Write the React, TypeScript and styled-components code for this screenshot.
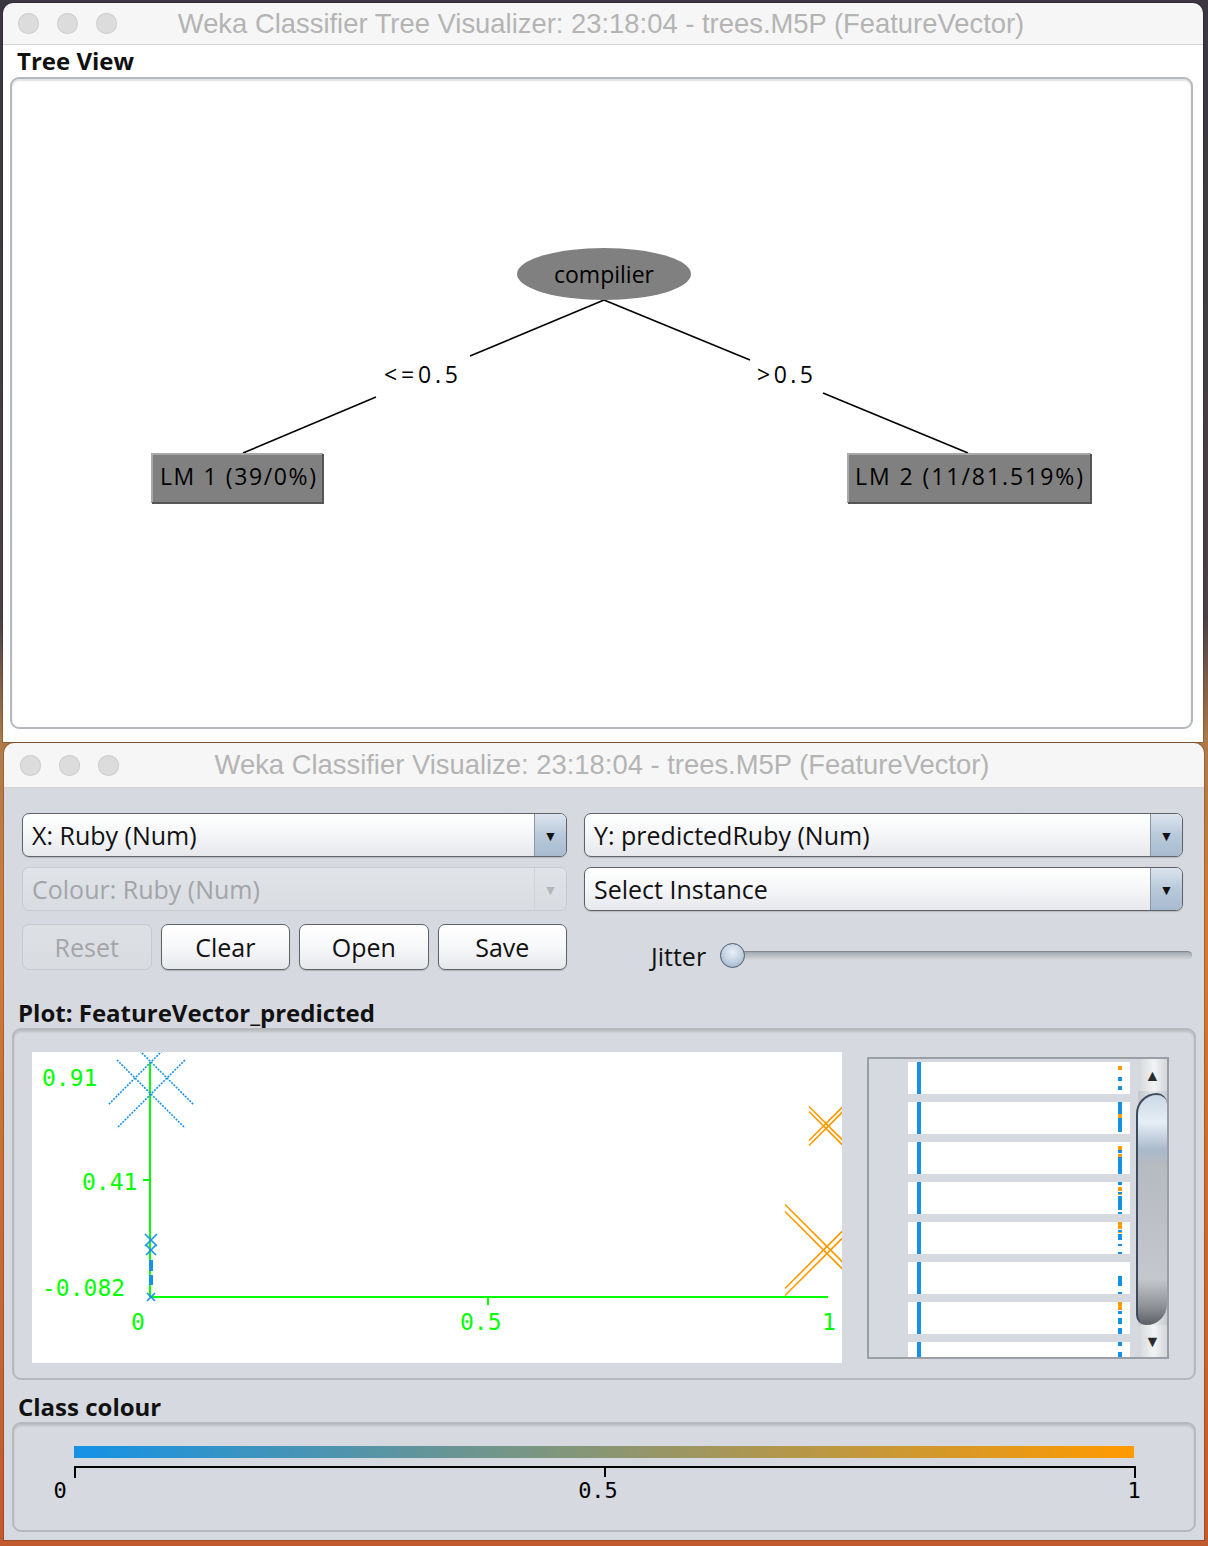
import React from 'react';
import styled, { createGlobalStyle } from 'styled-components';

const Global = createGlobalStyle`
  html, body { margin: 0; padding: 0; }
  body {
    width: 1208px;
    height: 1546px;
    overflow: hidden;
    background: linear-gradient(180deg, #3b3640 0%, #4a4046 40%, #b07a48 48%, #cf7a3a 60%, #c25a30 100%);
    font-family: "Open Sans", "Liberation Sans", sans-serif;
  }
`;

const UI = `"Open Sans", "Liberation Sans", sans-serif`;
const MONO = `"DejaVu Sans Mono", "Liberation Mono", monospace`;

const Desktop = styled.div`
  display: flex;
  flex-direction: column;
  padding-top: 3px;
  height: 1546px;
  box-sizing: border-box;
`;

const Window = styled.div<{ $left: number; $height: number; $top?: number }>`
  margin-left: ${(p) => p.$left}px;
  margin-top: ${(p) => p.$top ?? 0}px;
  width: 1200px;
  height: ${(p) => p.$height}px;
  flex: none;
  border-radius: 10px 10px 0 0;
  overflow: hidden;
  display: flex;
  flex-direction: column;
  box-shadow: 0 0 0 1px rgba(0, 0, 0, 0.18);
`;

const TitleBar = styled.div<{ $h: number; $pad: number }>`
  height: ${(p) => p.$h}px;
  flex: none;
  box-sizing: border-box;
  background: #f6f6f6;
  border-bottom: 1px solid #d3d3d3;
  display: grid;
  grid-template-columns: 1fr auto 1fr;
  align-items: center;
  padding: 0 ${(p) => p.$pad + 4}px 0 ${(p) => p.$pad}px;
`;

const Lights = styled.div`
  display: flex;
  gap: 18px;
`;

const Light = styled.span`
  width: 21px;
  height: 21px;
  border-radius: 50%;
  background: #dcdcdc;
  box-shadow: inset 0 0 0 1px #d0d0d0;
`;

const Title = styled.div`
  font-family: "Liberation Sans", Arial, sans-serif;
  font-size: 27.4px;
  color: #b4b4b4;
  white-space: nowrap;
`;

const TreeBody = styled.div`
  flex: 1;
  background: #ffffff;
  display: flex;
  flex-direction: column;
  padding: 0 10px 13px 7px;
`;

const SectionLabel = styled.div<{ $top?: number; $pad?: number; $lh?: number }>`
  height: 32px;
  line-height: ${(p) => p.$lh ?? 32}px;
  flex: none;
  margin-top: ${(p) => p.$top ?? 0}px;
  padding-left: ${(p) => p.$pad ?? 7}px;
  font-family: ${UI};
  font-weight: 700;
  font-size: 24px;
  color: #111;
  white-space: nowrap;
`;

const Framed = styled.div<{ $h: number; $bg: string }>`
  height: ${(p) => p.$h}px;
  flex: none;
  box-sizing: border-box;
  border: 2px solid #b5b8bd;
  border-radius: 9px;
  background: ${(p) => p.$bg};
  box-shadow: inset 0 2px 2px rgba(0, 0, 0, 0.12);
  overflow: hidden;
`;

const Canvas = styled.svg`
  display: block;
`;

const VisBody = styled.div`
  flex: 1;
  background: #d6d9df;
  display: flex;
  flex-direction: column;
  padding: 25px 8px 8px 8px;
`;

const Controls = styled.div`
  display: grid;
  grid-template-columns: 545px 599px;
  grid-template-rows: 44px 44px 49px;
  column-gap: 17px;
  row-gap: 10px;
  padding-left: 10px;
  & > :nth-child(n + 5) {
    margin-top: 3px;
  }
`;

const Combo = styled.div<{ $disabled?: boolean }>`
  box-sizing: border-box;
  display: flex;
  align-items: stretch;
  border: 1.5px solid ${(p) => (p.$disabled ? '#c6c9ce' : '#5f6266')};
  border-radius: 7px;
  overflow: hidden;
  background: ${(p) =>
    p.$disabled
      ? 'linear-gradient(180deg, #e0e3e8, #d9dce1)'
      : 'linear-gradient(180deg, #ffffff 0%, #f6f7f9 45%, #e6e8ec 100%)'};
  box-shadow: ${(p) => (p.$disabled ? 'none' : '0 1px 1px rgba(0,0,0,0.15)')};
`;

const ComboText = styled.div<{ $disabled?: boolean }>`
  flex: 1;
  display: flex;
  align-items: center;
  padding-left: 9px;
  font-family: ${UI};
  font-size: 25px;
  color: ${(p) => (p.$disabled ? '#a3a5a9' : '#111')};
  white-space: nowrap;
`;

const ComboArrow = styled.div<{ $disabled?: boolean }>`
  width: 31px;
  flex: none;
  display: flex;
  align-items: center;
  justify-content: center;
  border-left: 1px solid ${(p) => (p.$disabled ? '#cfd2d7' : '#8a97a6')};
  background: ${(p) =>
    p.$disabled
      ? 'linear-gradient(180deg, #dfe2e6, #d8dbe0)'
      : 'linear-gradient(180deg, #dbe4ee 0%, #b9c9da 50%, #a7bbd0 100%)'};
  color: ${(p) => (p.$disabled ? '#b4b6ba' : '#111')};
  font-size: 14px;
`;

const ButtonRow = styled.div`
  display: grid;
  grid-template-columns: repeat(4, 1fr);
  column-gap: 9px;
`;

const Button = styled.div<{ $disabled?: boolean }>`
  box-sizing: border-box;
  display: flex;
  align-items: center;
  justify-content: center;
  border: 1.5px solid ${(p) => (p.$disabled ? '#c6c9ce' : '#5f6266')};
  border-radius: 7px;
  background: ${(p) =>
    p.$disabled
      ? 'linear-gradient(180deg, #dde0e5, #d8dbe0)'
      : 'linear-gradient(180deg, #ffffff 0%, #f7f8fa 50%, #e5e7eb 100%)'};
  box-shadow: ${(p) => (p.$disabled ? 'none' : '0 1px 1px rgba(0,0,0,0.18)')};
  font-family: ${UI};
  font-size: 25px;
  color: ${(p) => (p.$disabled ? '#a3a5a9' : '#111')};
`;

const JitterCell = styled.div`
  display: flex;
  align-items: center;
  padding: 17px 0 0 67px;
  margin-right: -9px;
  gap: 14px;
`;

const JitterLabel = styled.span`
  font-family: ${UI};
  font-size: 25px;
  color: #111;
`;

const SliderTrack = styled.div`
  flex: 1;
  height: 9px;
  border-radius: 5px;
  background: linear-gradient(180deg, #9ea3ab 0%, #b9bdc4 50%, #d5d8dd 100%);
  box-shadow: inset 0 1px 1px rgba(0, 0, 0, 0.2);
  display: flex;
  align-items: center;
`;

const SliderThumb = styled.div`
  width: 25px;
  height: 25px;
  box-sizing: border-box;
  border-radius: 50%;
  border: 1.5px solid #4f5d70;
  background: radial-gradient(circle at 50% 35%, #e9eff6 0%, #bfcfe0 55%, #93a9c2 100%);
`;

const PlotInner = styled.div`
  display: flex;
  align-items: flex-start;
  gap: 25px;
  padding: 22px 0 0 18px;
`;

const PlotArea = styled.div`
  width: 810px;
  height: 311px;
  background: #ffffff;
  flex: none;
`;

const ClassList = styled.div`
  margin-top: 5px;
  width: 302px;
  height: 302px;
  box-sizing: border-box;
  border: 2px solid #9a9ea5;
  background: #d6d9df;
  display: flex;
  flex: none;
`;

const ListRows = styled.div`
  flex: 1;
  overflow: hidden;
  display: flex;
  flex-direction: column;
  gap: 8px;
  padding: 3px 0 0 39px;
`;

const ListRow = styled.div`
  width: 222px;
  height: 32px;
  flex: none;
  background: #ffffff;
`;

const ScrollBar = styled.div`
  width: 29px;
  flex: none;
  display: flex;
  flex-direction: column;
  margin-left: 8px;
  background: linear-gradient(90deg, #c3c6cb 0%, #e6e8eb 55%, #c8cbd0 100%);
`;

const ScrollBtn = styled.div`
  height: 32px;
  flex: none;
  display: flex;
  align-items: center;
  justify-content: center;
  font-size: 16px;
  color: #2a2a2a;
  background: linear-gradient(90deg, #d3d6da 0%, #f2f3f5 55%, #d3d6da 100%);
`;

const ScrollTrack = styled.div`
  flex: 1;
  padding-top: 2px;
`;

const Thumb = styled.div`
  height: 230px;
  margin-left: -2px;
  border-radius: 28px 14px 28px 14px;
  border-left: 2px solid #3c4a5c;
  border-top: 2px solid #3c4a5c;
  background: linear-gradient(180deg, #cbd8e6 0%, #e6eef6 12%, #a9b9cb 24%, #b6bac1 30%, #c4c7cc 80%, #8e9196 92%, #5b5e63 100%);
`;

const treeLines: [number, number, number, number][] = [
  [604, 300, 470, 356],
  [376, 397, 243, 453],
  [604, 300, 750, 360],
  [823, 393, 968, 453],
];

type Seg = [number, number, string];
const BLUE = '#1592e6';
const ORANGE = '#ff9a00';
const rowSegs: Seg[][] = [
  [[4, 8, ORANGE], [15, 19, BLUE], [24, 28, BLUE]],
  [[0, 12, BLUE], [12, 16, ORANGE], [16, 30, BLUE]],
  [[4, 8, ORANGE], [8, 11, BLUE], [12, 15, ORANGE], [15, 32, BLUE]],
  [[0, 3, BLUE], [5, 9, ORANGE], [10, 12, BLUE], [12, 13, ORANGE], [14, 28, BLUE], [30, 32, BLUE]],
  [[0, 7, ORANGE], [8, 10, BLUE], [10, 11, ORANGE], [12, 18, BLUE], [22, 24, BLUE], [30, 32, BLUE]],
  [[14, 24, BLUE], [30, 32, BLUE]],
  [[0, 8, ORANGE], [9, 12, BLUE], [16, 22, BLUE], [26, 32, BLUE]],
  [[0, 4, BLUE], [10, 16, BLUE]],
];

const Cross = ({ cx, cy, h, color, dash }: { cx: number; cy: number; h: number; color: string; dash?: string }) => (
  <g stroke={color} strokeWidth={1.6} strokeDasharray={dash}>
    <line x1={cx - h} y1={cy - h} x2={cx + h} y2={cy + h} />
    <line x1={cx + h} y1={cy - h} x2={cx - h} y2={cy + h} />
  </g>
);

const DoubleCross = ({ cx, cy, h, color, off }: { cx: number; cy: number; h: number; color: string; off: number }) => (
  <g stroke={color} strokeWidth={1.6}>
    <line x1={cx - h} y1={cy - h - off} x2={cx + h} y2={cy + h - off} />
    <line x1={cx - h} y1={cy - h + off} x2={cx + h} y2={cy + h + off} />
    <line x1={cx + h} y1={cy - h - off} x2={cx - h} y2={cy + h - off} />
    <line x1={cx + h} y1={cy - h + off} x2={cx - h} y2={cy + h + off} />
  </g>
);

const GREEN = '#00ff00';

export default function App() {
  return (
    <>
      <Global />
      <Desktop>
        <Window $left={3} $height={739}>
          <TitleBar $h={42} $pad={15}>
            <Lights>
              <Light />
              <Light />
              <Light />
            </Lights>
            <Title>Weka Classifier Tree Visualizer: 23:18:04 - trees.M5P (FeatureVector)</Title>
            <span />
          </TitleBar>
          <TreeBody>
            <SectionLabel>Tree View</SectionLabel>
            <Framed $h={652} $bg="#ffffff">
              <Canvas width={1179} height={648} viewBox="12 79 1179 648">
                {treeLines.map(([a, b, c, d], i) => (
                  <line key={i} x1={a} y1={b} x2={c} y2={d} stroke="#000" strokeWidth={1.6} />
                ))}
                <ellipse cx={604} cy={274} rx={87} ry={26} fill="#808080" />
                <text x={604} y={283} textAnchor="middle" fontFamily={UI} fontSize={23} fill="#000">
                  compilier
                </text>
                <text x={421} y={383} textAnchor="middle" fontFamily={UI} fontSize={23} fill="#000" textLength={74} lengthAdjust="spacing">
                  {'<=0.5'}
                </text>
                <text x={785} y={383} textAnchor="middle" fontFamily={UI} fontSize={23} fill="#000" textLength={56} lengthAdjust="spacing">
                  {'>0.5'}
                </text>
                <g>
                  <rect x={152} y={454} width={171} height={49} fill="#808080" />
                  <path d="M152 503 V454 H323" stroke="#a8a8a8" strokeWidth={2} fill="none" />
                  <path d="M152 503 H323 V454" stroke="#555" strokeWidth={2} fill="none" />
                  <text x={238} y={485} textAnchor="middle" fontFamily={UI} fontSize={23} fill="#000" textLength={156} lengthAdjust="spacing">
                    LM 1 (39/0%)
                  </text>
                </g>
                <g>
                  <rect x={848} y={454} width={243} height={49} fill="#808080" />
                  <path d="M848 503 V454 H1091" stroke="#a8a8a8" strokeWidth={2} fill="none" />
                  <path d="M848 503 H1091 V454" stroke="#555" strokeWidth={2} fill="none" />
                  <text x={969} y={485} textAnchor="middle" fontFamily={UI} fontSize={23} fill="#000" textLength={228} lengthAdjust="spacing">
                    LM 2 (11/81.519%)
                  </text>
                </g>
              </Canvas>
            </Framed>
          </TreeBody>
        </Window>

        <Window $left={4} $height={797} $top={1}>
          <TitleBar $h={45} $pad={16}>
            <Lights>
              <Light />
              <Light />
              <Light />
            </Lights>
            <Title>Weka Classifier Visualize: 23:18:04 - trees.M5P (FeatureVector)</Title>
            <span />
          </TitleBar>
          <VisBody>
            <Controls>
              <Combo>
                <ComboText>X: Ruby (Num)</ComboText>
                <ComboArrow>▼</ComboArrow>
              </Combo>
              <Combo>
                <ComboText>Y: predictedRuby (Num)</ComboText>
                <ComboArrow>▼</ComboArrow>
              </Combo>
              <Combo $disabled>
                <ComboText $disabled>Colour: Ruby (Num)</ComboText>
                <ComboArrow $disabled>▼</ComboArrow>
              </Combo>
              <Combo>
                <ComboText>Select Instance</ComboText>
                <ComboArrow>▼</ComboArrow>
              </Combo>
              <ButtonRow>
                <Button $disabled>Reset</Button>
                <Button>Clear</Button>
                <Button>Open</Button>
                <Button>Save</Button>
              </ButtonRow>
              <JitterCell>
                <JitterLabel>Jitter</JitterLabel>
                <SliderTrack>
                  <SliderThumb />
                </SliderTrack>
              </JitterCell>
            </Controls>

            <SectionLabel $top={26} $pad={6} $lh={34}>Plot: FeatureVector_predicted</SectionLabel>
            <Framed $h={352} $bg="#d6d9df">
              <PlotInner>
                <PlotArea>
                  <Canvas width={810} height={311} viewBox="32 1052 810 311">
                    <g stroke={GREEN} strokeWidth={2}>
                      <line x1={150} y1={1062} x2={150} y2={1297} />
                      <line x1={150} y1={1297} x2={828} y2={1297} />
                      <line x1={143} y1={1180} x2={150} y2={1180} />
                      <line x1={488} y1={1297} x2={488} y2={1305} />
                    </g>
                    <g fontFamily={MONO} fontSize={23} fill={GREEN}>
                      <text x={42} y={1086}>0.91</text>
                      <text x={82} y={1190}>0.41</text>
                      <text x={42} y={1296}>-0.082</text>
                      <text x={131} y={1330}>0</text>
                      <text x={460} y={1330}>0.5</text>
                      <text x={822} y={1330}>1</text>
                    </g>
                    <Cross cx={151} cy={1094} h={34} color={BLUE} dash="2 1.2" />
                    <Cross cx={151} cy={1062} h={43} color={BLUE} dash="2 1.2" />
                    <Cross cx={151} cy={1240} h={6} color={BLUE} />
                    <Cross cx={151} cy={1250} h={5} color={BLUE} />
                    <rect x={149} y={1260} width={4} height={11} fill={BLUE} />
                    <rect x={149} y={1275} width={4} height={10} fill={BLUE} />
                    <Cross cx={151} cy={1297} h={4} color={BLUE} />
                    <DoubleCross cx={826} cy={1126} h={17} color={ORANGE} off={2.5} />
                    <DoubleCross cx={827} cy={1250} h={42} color={ORANGE} off={3.5} />
                  </Canvas>
                </PlotArea>
                <ClassList>
                  <ListRows>
                    {rowSegs.map((segs, i) => (
                      <ListRow key={i}>
                        <svg width={222} height={32} style={{ display: 'block' }}>
                          <rect x={9} y={0} width={4} height={32} fill={BLUE} />
                          {segs.map(([a, b, c], j) => (
                            <rect key={j} x={210} y={a} width={4} height={b - a} fill={c} />
                          ))}
                        </svg>
                      </ListRow>
                    ))}
                  </ListRows>
                  <ScrollBar>
                    <ScrollBtn>▲</ScrollBtn>
                    <ScrollTrack>
                      <Thumb />
                    </ScrollTrack>
                    <ScrollBtn>▼</ScrollBtn>
                  </ScrollBar>
                </ClassList>
              </PlotInner>
            </Framed>

            <SectionLabel $top={10} $pad={6} $lh={34}>Class colour</SectionLabel>
            <Framed $h={110} $bg="#d6d9df">
              <Canvas width={1180} height={106} viewBox="14 1424 1180 106">
                <defs>
                  <linearGradient id="cc" x1="0" x2="1" y1="0" y2="0">
                    <stop offset="0" stopColor={BLUE} />
                    <stop offset="1" stopColor={ORANGE} />
                  </linearGradient>
                </defs>
                <rect x={74} y={1446} width={1060} height={12} fill="url(#cc)" />
                <path d="M75 1478 V1467 H1135 V1478 M605 1467 V1477" stroke="#000" strokeWidth={2} fill="none" />
                <g fontFamily={MONO} fontSize={22} fill="#000" textAnchor="middle">
                  <text x={60} y={1498}>0</text>
                  <text x={598} y={1498}>0.5</text>
                  <text x={1134} y={1498}>1</text>
                </g>
              </Canvas>
            </Framed>
          </VisBody>
        </Window>
      </Desktop>
    </>
  );
}
